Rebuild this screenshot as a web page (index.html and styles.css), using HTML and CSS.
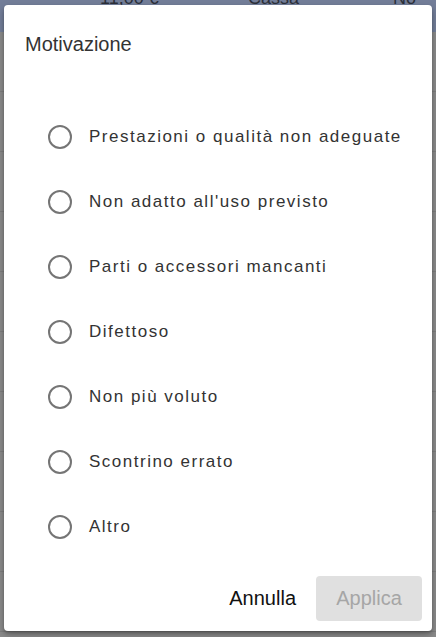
FILE: index.html
```html
<!DOCTYPE html>
<html lang="it">
<head>
<meta charset="utf-8">
<title>Motivazione</title>
<link rel="stylesheet" href="styles.css">
</head>
<body>
<div class="page">
  <div class="band">
    <span class="c1">11,00 €</span>
    <span class="c2">Cassa</span>
    <span class="c3">No</span>
  </div>
  <div class="row"></div>
  <div class="row"></div>
  <div class="row"></div>
  <div class="row"></div>
  <div class="row"></div>
  <div class="row"></div>
  <div class="row"></div>
  <div class="row"></div>
  <div class="row"></div>
  <div class="row"></div>
</div>
<div class="dialog">
  <div class="title">Motivazione</div>
  <div class="options">
    <label class="opt"><span class="radio"></span><span class="lbl">Prestazioni o qualità non adeguate</span></label>
    <label class="opt"><span class="radio"></span><span class="lbl">Non adatto all'uso previsto</span></label>
    <label class="opt"><span class="radio"></span><span class="lbl">Parti o accessori mancanti</span></label>
    <label class="opt"><span class="radio"></span><span class="lbl">Difettoso</span></label>
    <label class="opt"><span class="radio"></span><span class="lbl">Non più voluto</span></label>
    <label class="opt"><span class="radio"></span><span class="lbl">Scontrino errato</span></label>
    <label class="opt"><span class="radio"></span><span class="lbl">Altro</span></label>
  </div>
  <div class="actions">
    <button class="btn cancel">Annulla</button>
    <button class="btn apply" disabled>Applica</button>
  </div>
</div>
</body>
</html>
```
FILE: styles.css
```css
html, body {
  margin: 0;
  padding: 0;
  width: 436px;
  height: 637px;
  overflow: hidden;
  background: #8b8b8b;
  font-family: "Liberation Sans", Arial, sans-serif;
}
.page {
  display: flex;
  flex-direction: column;
}
.band {
  height: 32px;
  background: #737e99;
  display: flex;
  align-items: flex-end;
  font-size: 18px;
  color: #2b2f38;
  line-height: 20px;
  overflow: hidden;
}
.band span {
  display: block;
  margin-bottom: 24px;
}
.c1 { margin-left: 100px; width: 148px; }
.c2 { width: 145px; }
.row {
  height: 59px;
  border-bottom: 1px solid #7e7e7e;
}
.dialog {
  position: absolute;
  left: 4px;
  top: 5px;
  width: 428px;
  height: 626px;
  background: #fff;
  border-radius: 4px;
  box-shadow: 0 4px 8px rgba(0,0,0,0.25), 0 2px 3px rgba(0,0,0,0.2);
  display: flex;
  flex-direction: column;
}
.title {
  font-size: 20px;
  line-height: 24px;
  color: #333;
  padding: 27px 21px 0;
}
.options {
  display: flex;
  flex-direction: column;
  margin-top: 48px;
}
.opt {
  height: 65px;
  display: flex;
  align-items: center;
  padding-left: 44px;
}
.radio {
  width: 20px;
  height: 20px;
  border: 2px solid #757575;
  border-radius: 50%;
  flex: none;
}
.lbl {
  margin-left: 17px;
  font-size: 17px;
  letter-spacing: 1.5px;
  color: #333;
}
.actions {
  margin-top: auto;
  display: flex;
  justify-content: flex-end;
  align-items: center;
  gap: 10px;
  padding: 0 10px 10px;
}
.btn {
  font-family: "Liberation Sans", Arial, sans-serif;
  font-size: 20px;
  height: 45px;
  border: 0;
  border-radius: 4px;
  padding: 0 20px;
  background: transparent;
}
.cancel { color: #111; padding: 0 10px; }
.apply {
  background: #e0e0e0;
  color: #a6a6a6;
  width: 106px;
}
```
